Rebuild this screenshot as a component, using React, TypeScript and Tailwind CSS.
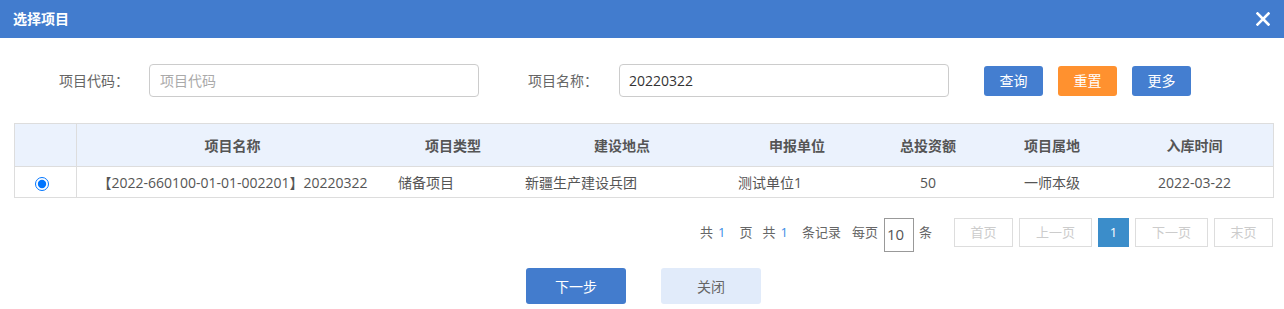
import React from "react";

export default function App() {
  const headers = ["项目名称", "项目类型", "建设地点", "申报单位", "总投资额", "项目属地", "入库时间"];
  return (
    <div className="w-[1284px] h-[309px] bg-white font-['Open_Sans','Noto_Sans_CJK_SC',sans-serif] overflow-hidden">
      {/* title bar */}
      <div className="h-[38px] bg-[#427cce] flex items-center justify-between pl-[13px] pr-[14px]">
        <span className="text-[14px] font-bold text-white leading-none">选择项目</span>
        <svg width="14" height="14" viewBox="0 0 14 14" className="block">
          <path d="M1.5 1.5 L12.5 12.5 M12.5 1.5 L1.5 12.5" stroke="#fff" strokeWidth="2.6" strokeLinecap="square" />
        </svg>
      </div>

      {/* search row */}
      <div className="mt-[26px] flex items-center h-[33px]">
        <span className="ml-[59px] w-[90px] text-[14px] text-[#666]">项目代码：</span>
        <div className="w-[330px] h-[33px] border border-[#ccc] rounded-[4px] flex items-center pl-[10px] text-[14px] text-[#aaa]">
          项目代码
        </div>
        <span className="ml-[49px] w-[91px] text-[14px] text-[#666]">项目名称：</span>
        <div className="w-[330px] h-[33px] border border-[#ccc] rounded-[4px] flex items-center pl-[9px] text-[14px] text-[#333]">
          20220322
        </div>
        <div className="ml-[35px] flex gap-[15px]">
          <div className="w-[59px] h-[30px] rounded-[3px] bg-[#447ed0] text-white text-[14px] flex items-center justify-center">查询</div>
          <div className="w-[59px] h-[30px] rounded-[3px] bg-[#ff912f] text-white text-[14px] flex items-center justify-center">重置</div>
          <div className="w-[59px] h-[30px] rounded-[3px] bg-[#447ed0] text-white text-[14px] flex items-center justify-center">更多</div>
        </div>
      </div>

      {/* table */}
      <div className="ml-[14px] mt-[26px] w-[1260px] border border-[#dddddd]">
        <div className="grid grid-cols-[62px_311px_130px_208px_142px_120px_128px_157px] h-[43px] bg-[#ebf2fd] border-b border-[#dddddd] text-[14px] font-bold text-[#555]">
          <div className="border-r border-[#dddddd]" />
          {headers.map((h) => (
            <div key={h} className="flex items-center justify-center">{h}</div>
          ))}
        </div>
        <div className="grid grid-cols-[62px_311px_130px_208px_142px_120px_128px_157px] h-[30px] text-[14px] text-[#555]">
          <div className="border-r border-[#dddddd] flex items-center justify-center pt-[3px] pr-[8px]">
            <input type="radio" checked readOnly className="m-0 w-[14px] h-[14px]" />
          </div>
          <div className="flex items-center justify-center">【2022-660100-01-01-002201】20220322</div>
          <div className="flex items-center pl-[10px]">储备项目</div>
          <div className="flex items-center pl-[7px]">新疆生产建设兵团</div>
          <div className="flex items-center pl-[12px]">测试单位1</div>
          <div className="flex items-center justify-center">50</div>
          <div className="flex items-center justify-center">一师本级</div>
          <div className="flex items-center justify-center">2022-03-22</div>
        </div>
      </div>

      {/* pagination */}
      <div className="mt-[20px] flex items-center justify-end pr-[11px] h-[29px] text-[13px] text-[#666]">
        <span>共</span>
        <span className="ml-[5px] text-[#3a8ee6]">1</span>
        <span className="ml-[14px]">页</span>
        <span className="ml-[10px]">共</span>
        <span className="ml-[5px] text-[#3a8ee6]">1</span>
        <span className="ml-[14px]">条记录</span>
        <span className="ml-[11px]">每页</span>
        <div className="ml-[6px] w-[30px] h-[34px] border border-[#999] flex items-center pl-[2px] text-[15px] text-[#555] mt-[4px]">10</div>
        <span className="ml-[5px]">条</span>
        <div className="ml-[22px] flex gap-[6px]">
          <div className="w-[59px] h-[29px] border border-[#ddd] text-[#ccc] flex items-center justify-center">首页</div>
          <div className="w-[73px] h-[29px] border border-[#ddd] text-[#ccc] flex items-center justify-center">上一页</div>
          <div className="w-[31px] h-[29px] bg-[#3b8dca] text-white flex items-center justify-center">1</div>
          <div className="w-[73px] h-[29px] border border-[#ddd] text-[#ccc] flex items-center justify-center">下一页</div>
          <div className="w-[59px] h-[29px] border border-[#ddd] text-[#ccc] flex items-center justify-center">末页</div>
        </div>
      </div>

      {/* footer buttons */}
      <div className="mt-[21px] flex justify-center gap-[35px] pl-[3px]">
        <div className="w-[100px] h-[36px] rounded-[3px] bg-[#437ccd] text-white text-[14px] flex items-center justify-center">下一步</div>
        <div className="w-[100px] h-[36px] rounded-[3px] bg-[#e1ebfa] text-[#666] text-[14px] flex items-center justify-center">关闭</div>
      </div>
    </div>
  );
}
